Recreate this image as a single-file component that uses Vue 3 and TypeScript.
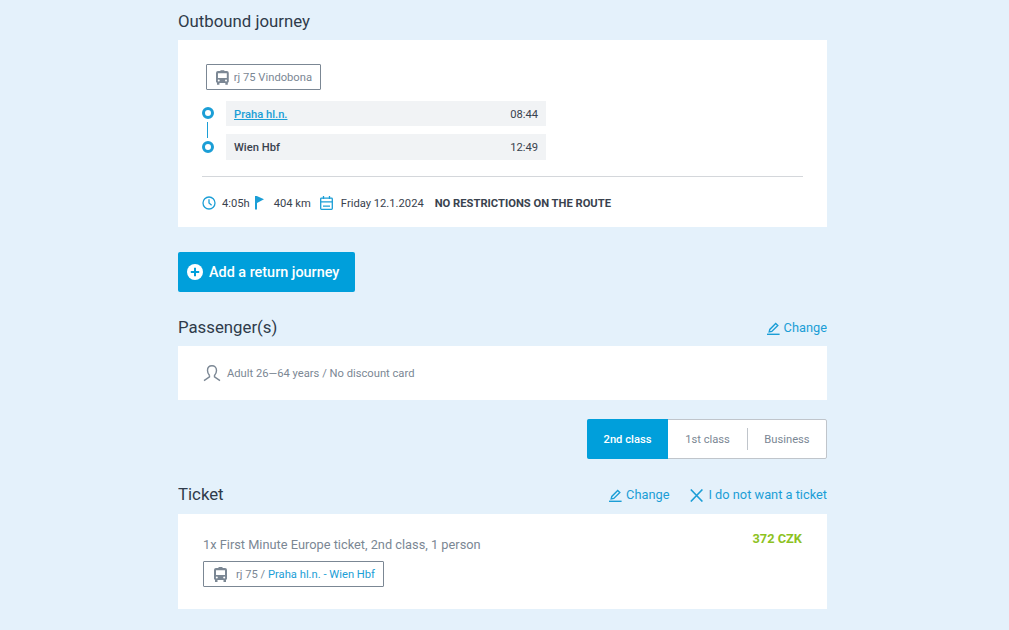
<script setup lang="ts">
const tabs = ['2nd class', '1st class', 'Business']
</script>

<template>
  <div class="page">
    <h2 class="title first">Outbound journey</h2>
    <section class="card journey">
      <div class="tag tag-top">
        <svg class="bus" viewBox="0 0 13 15" width="13" height="15"><path fill="#7b8794" fill-rule="evenodd" d="M4.500 0h4v1H11a2 2 0 0 1 2 2v8.500a1.500 1.500 0 0 1-1 1.400V15h-2.500v-2h-6v2H1v-2.100a1.500 1.500 0 0 1-1-1.400V3a2 2 0 0 1 2-2h2.500zM2 3.200v4.800h9V3.200zm.8 6.300a1 1 0 1 0 0 2 1 1 0 0 0 0-2zm7.400 0a1 1 0 1 0 0 2 1 1 0 0 0 0-2z"/></svg>
        <span>rj 75 Vindobona</span>
      </div>
      <div class="route">
        <div class="rail">
          <span class="dot"></span>
          <span class="line"></span>
          <span class="dot"></span>
        </div>
        <div class="stops">
          <div class="stop stop1"><a class="link">Praha hl.n.</a><span>08:44</span></div>
          <div class="stop stop2"><b>Wien Hbf</b><span>12:49</span></div>
        </div>
      </div>
      <div class="meta">
        <svg class="i" viewBox="0 0 14 14" width="14" height="14" fill="none" stroke="#1b9ed6" stroke-width="1.300"><circle cx="7" cy="7" r="6"/><path d="M7 3.200V7l2.600 2.200"/></svg>
        <span class="m1">4:05h</span>
        <svg class="flag" viewBox="0 0 9 14" width="9" height="14"><path fill="#1b9ed6" d="M0 0h1.800l7.200 3.300-7 3.700V13.500H0z"/></svg>
        <span class="m2">404 km</span>
        <svg class="cal" viewBox="0 0 13 14" width="13" height="14" fill="none" stroke="#1b9ed6" stroke-width="1.300"><rect x=".7" y="2.100" width="11.600" height="11.200" rx=".8"/><path d="M.7 5.800h11.600M3.500 0v3M9.500 0v3M3 10.200h7"/></svg>
        <span class="m3">Friday 12.1.2024</span>
        <b class="m4">NO RESTRICTIONS ON THE ROUTE</b>
      </div>
    </section>

    <button class="add">
      <svg viewBox="0 0 16 16" width="16" height="16"><circle cx="8" cy="8" r="8" fill="#fff"/><path d="M8 3.800v8.400M3.800 8h8.400" stroke="#009fdb" stroke-width="2"/></svg>
      Add a return journey
    </button>

    <div class="head head-p">
      <h2 class="title">Passenger(s)</h2>
      <a class="action">
        <svg viewBox="0 0 13 13" width="13" height="13" fill="none" stroke="#1b9ed6" stroke-width="1.400"><path d="M0 12.300h12.600"/><path d="M2.200 9.900l.6-2.500L8.700 1.400l2.100 2-6 6z"/></svg>
        Change
      </a>
    </div>
    <section class="card passenger">
      <svg viewBox="0 0 18 17" width="18" height="17" fill="none" stroke="#7b8794" stroke-width="1.400"><path d="M6.500 10.500C5 8.800 4.500 7.500 4.500 5.500 4.500 2.500 6.500.7 9 .7s4.500 1.800 4.500 4.800c0 2-.5 3.300-2 5v1.300l5.500 3.800M6.500 10.500v1.300L1 15.600"/></svg>
      <span>Adult 26—64 years / No discount card</span>
    </section>

    <div class="tabs-row">
      <div class="tabs">
        <span v-for="(t, i) in tabs" :key="t" class="tab" :class="'tab' + i">{{ t }}</span>
      </div>
    </div>

    <div class="head head-t">
      <h2 class="title">Ticket</h2>
      <div class="actions">
        <a class="action">
          <svg viewBox="0 0 13 13" width="13" height="13" fill="none" stroke="#1b9ed6" stroke-width="1.400"><path d="M0 12.300h12.600"/><path d="M2.200 9.900l.6-2.500L8.700 1.400l2.100 2-6 6z"/></svg>
          Change
        </a>
        <a class="action act-x">
          <svg viewBox="0 0 13 13" width="13" height="13" fill="none" stroke="#1b9ed6" stroke-width="1.600"><path d="M.8.500l11.600 12M12.400.500L.8 12.500"/></svg>
          I do not want a ticket
        </a>
      </div>
    </div>
    <section class="card ticket">
      <div class="ticket-main">
        <p class="desc">1x First Minute Europe ticket, 2nd class, 1 person</p>
        <div class="tag tag-bottom">
          <svg class="bus" viewBox="0 0 13 15" width="13" height="15"><path fill="#7b8794" fill-rule="evenodd" d="M4.500 0h4v1H11a2 2 0 0 1 2 2v8.500a1.500 1.500 0 0 1-1 1.400V15h-2.500v-2h-6v2H1v-2.100a1.500 1.500 0 0 1-1-1.400V3a2 2 0 0 1 2-2h2.500zM2 3.200v4.800h9V3.200zm.8 6.300a1 1 0 1 0 0 2 1 1 0 0 0 0-2zm7.400 0a1 1 0 1 0 0 2 1 1 0 0 0 0-2z"/></svg>
          <span>rj 75 / <em>Praha hl.n. - Wien Hbf</em></span>
        </div>
      </div>
      <b class="price">372 CZK</b>
    </section>
  </div>
</template>

<style>
html, body { margin: 0; background: #e4f1fb; }
</style>

<style scoped>
.page {
  width: 649px;
  margin-left: 178px;
  height: 630px;
  overflow: hidden;
  font-family: Roboto, "Liberation Sans", sans-serif;
  color: #2f3b4a;
}
.title {
  margin: 0;
  font-size: 16.800px;
  line-height: 20px;
  font-weight: 400;
  color: #2f3b4a;
}
.first { padding-top: 11px; height: 29px; box-sizing: content-box; }
.card { background: #fff; box-sizing: border-box; }
.journey { height: 187px; padding: 24px 24px 0; }
.tag {
  display: inline-flex;
  align-items: center;
  box-sizing: border-box;
  border: 1px solid #7b8794;
  border-radius: 1px;
  color: #7b8794;
  font-size: 11.200px;
  height: 26px;
}
.tag-top { margin-left: 4px; padding: 0 8px 0 9px; gap: 5px; width: 115px; white-space: nowrap; }
.route { display: flex; margin-top: 11px; gap: 12px; }
.rail { width: 12px; display: flex; flex-direction: column; padding-top: 6px; }
.dot { width: 12px; height: 12px; box-sizing: border-box; border: 3.500px solid #1b9ed6; border-radius: 50%; }
.line { width: 1px; height: 16px; background: #1b9ed6; margin: 3px 0 3px 5px; }
.stops { width: 320px; display: flex; flex-direction: column; gap: 8px; font-size: 11.200px; }
.stop {
  display: flex;
  justify-content: space-between;
  align-items: center;
  background: #f1f3f5;
  box-sizing: border-box;
  height: 25px;
  padding: 0 8px;
  color: #39424e;
}
.stop1 { padding-top: 2px; }
.stop2 { height: 26px; }
.stop b { font-weight: 500; }
.link { color: #1b9ed6; text-decoration: underline; font-weight: 500; }
.meta {
  margin-top: 16px;
  border-top: 1px solid #d4d7db;
  padding-top: 19px;
  display: flex;
  align-items: center;
  font-size: 11.200px;
  color: #39424e;
  height: 14px;
}
.m1 { margin-left: 6px; }
.flag { margin-left: 5px; }
.m2 { margin-left: 10px; }
.cal { margin-left: 9px; }
.m3 { margin-left: 8px; }
.m4 { margin-left: 11px; font-weight: 700; }
.add {
  margin-top: 25px;
  display: flex;
  align-items: center;
  gap: 6px;
  width: 177px;
  height: 40px;
  padding: 0 0 0 9px;
  border: 0;
  border-radius: 2px;
  background: #009fdb;
  color: #fff;
  font: 500 14.400px Roboto, sans-serif;
  white-space: nowrap;
}
.head { display: flex; justify-content: space-between; align-items: flex-end; box-sizing: border-box; }
.head-p { height: 54px; padding-bottom: 9px; }
.head-t { height: 55px; padding-bottom: 10px; }
.action {
  display: inline-flex;
  align-items: center;
  gap: 4px;
  margin-bottom: -1px;
  color: #1b9ed6;
  font-size: 12.800px;
  line-height: 20px;
  white-space: nowrap;
}
.act-x { gap: 5px; }
.actions { display: flex; gap: 21px; }
.passenger {
  height: 54px;
  padding: 0 0 0 25px;
  display: flex;
  align-items: center;
  gap: 6px;
  font-size: 11.200px;
  color: #7b8794;
}
.tabs-row { display: flex; justify-content: flex-end; margin-top: 19px; }
.tabs {
  display: flex;
  width: 240px;
  height: 40px;
  box-sizing: border-box;
  background: #fff;
  border: 1px solid #c0c5cb;
  border-radius: 2px;
  font-size: 11.200px;
  color: #7b8794;
}
.tab { display: flex; align-items: center; justify-content: center; position: relative; }
.tab0 {
  width: 81px;
  margin: -1px 0 -1px -1px;
  background: #009fdb;
  color: #fff;
  font-weight: 500;
  border-radius: 2px 0 0 2px;
}
.tab1 { width: 79px; border-right: 1px solid #c0c5cb; height: 22px; align-self: center; }
.tab2 { flex: 1; }
.ticket {
  height: 95px;
  padding: 23px 25px 0 25px;
  display: flex;
  justify-content: space-between;
  align-items: flex-start;
}
.ticket-main { display: flex; flex-direction: column; align-items: flex-start; }
.desc { margin: 0 0 9px; font-size: 12.800px; line-height: 15px; color: #7b8794; }
.tag-bottom { width: 181px; padding-left: 10px; gap: 9px; white-space: nowrap; }
.tag-bottom em { font-style: normal; color: #1b9ed6; }
.price { font-size: 12.800px; color: #8dc21f; font-weight: 700; margin-top: -6px; line-height: 16px; }
</style>
